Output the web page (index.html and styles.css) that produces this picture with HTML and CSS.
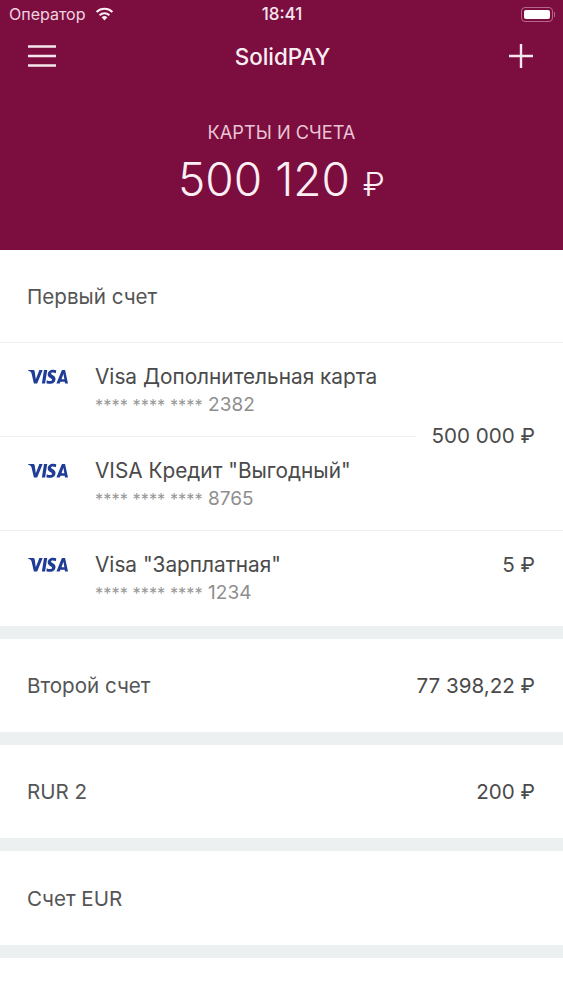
FILE: index.html
```html
<!DOCTYPE html>
<html lang="ru">
<head>
<meta charset="utf-8">
<title>SolidPAY</title>
<link rel="stylesheet" href="styles.css">
</head>
<body>
<header class="hero">
  <div class="status">
    <div class="status-left">
      <span class="carrier">Оператор</span>
      <svg class="wifi" width="19" height="14" viewBox="0 0 19 14"><path d="M9.500 13.500 6.600 10.300a4.200 4.200 0 0 1 5.800 0Z" fill="#fbeef4"/><path d="M4.600 8.200a7.100 7.100 0 0 1 9.800 0" fill="none" stroke="#fbeef4" stroke-width="2.100"/><path d="M1.600 5a11.400 11.400 0 0 1 15.800 0" fill="none" stroke="#fbeef4" stroke-width="2.100"/></svg>
    </div>
    <span class="time">18:41</span>
    <div class="battery-wrap">
      <div class="battery"><span class="battery-fill"></span></div>
      <span class="battery-nub"></span>
    </div>
  </div>
  <nav class="nav">
    <svg class="menu" width="28" height="22" viewBox="0 0 28 22"><path d="M0 1.500h28M0 11h28M0 20.500h28" stroke="#f6e6ee" stroke-width="2.400" fill="none"/></svg>
    <span class="brand">SolidPAY</span>
    <svg class="plus" width="24" height="24" viewBox="0 0 24 24"><path d="M12 0v24M0 12h24" stroke="#f6e6ee" stroke-width="2.400" fill="none"/></svg>
  </nav>
  <div class="total">
    <div class="total-label">КАРТЫ И СЧЕТА</div>
    <div class="total-sum">500 120 <span class="total-rub">₽</span></div>
  </div>
</header>
<main>
  <section class="account">
    <div class="acc-row acc-head"><span>Первый счет</span></div>
    <div class="card">
      <svg class="visa" viewBox="0 0 42 16" width="41" height="15.600"><use href="#visa"/></svg>
      <div class="card-info"><div class="card-name">Visa Дополнительная карта</div><div class="card-num"><span class="stars">**** **** ****</span> 2382</div></div>
      <span class="amount amount-over">500 000 ₽</span>
    </div>
    <div class="card">
      <svg class="visa" viewBox="0 0 42 16" width="41" height="15.600"><use href="#visa"/></svg>
      <div class="card-info"><div class="card-name">VISA Кредит "Выгодный"</div><div class="card-num"><span class="stars">**** **** ****</span> 8765</div></div>
    </div>
    <div class="card card-last">
      <svg class="visa" viewBox="0 0 42 16" width="41" height="15.600"><use href="#visa"/></svg>
      <div class="card-info"><div class="card-name">Visa "Зарплатная"</div><div class="card-num"><span class="stars">**** **** ****</span> 1234</div></div>
      <span class="amount">5 ₽</span>
    </div>
  </section>
  <section class="account acc-row"><span>Второй счет</span><span class="amount">77 398,22 ₽</span></section>
  <section class="account acc-row"><span>RUR 2</span><span class="amount">200 ₽</span></section>
  <section class="account acc-row acc-end"><span>Счет EUR</span></section>
</main>
<svg class="defs" width="0" height="0">
  <defs>
    <g id="visa" fill="#1f3c96">
      <path d="M0 1h5.200c.8 0 1.400.4 1.600 1.200L8 10.500 11.600 1h3.400L9.400 15H6L3.500 4.200C3 2.800 1.600 1.900 0 1.500Z"/>
      <path d="M16.400 1h3.300l-2.200 14h-3.300Z"/>
      <path d="M29 1.400l-.5 2.900c-1-.5-2-.7-3-.7-1.300 0-1.900.5-1.900 1.100 0 1.600 4.600 2 4.600 5.500 0 3.200-2.600 5-5.700 5-1.500 0-2.800-.3-3.700-.7l.5-3c1.100.6 2.200.9 3.300.9 1.300 0 2.100-.5 2.100-1.300 0-1.700-4.500-2-4.500-5.400C20.200 2.500 22.800.8 25.800.8c1.200 0 2.400.2 3.200.6Z"/>
      <path fill-rule="evenodd" d="M35.200 1H38l3 14h-3l-.4-2h-4.300l-.8 2h-3.400l5-12.500c.3-.9 1-1.500 1.100-1.500Zm1.100 4-1.900 5.400h2.900Z"/>
    </g>
  </defs>
</svg>
</body>
</html>
```
FILE: styles.css
```css
* { box-sizing: border-box; }
html, body { margin: 0; padding: 0; }
body {
  width: 563px;
  min-height: 1000px;
  background: #fff;
  font-family: "Inter", "Roboto", "Liberation Sans", sans-serif;
  color: #555;
  overflow: hidden;
}
.hero {
  height: 250px;
  background: #7b0e3e;
  color: #fff;
  display: flex;
  flex-direction: column;
}
.status {
  height: 28px;
  padding: 0 8px 0 9px;
  display: grid;
  grid-template-columns: 1fr auto 1fr;
  align-items: center;
  font-size: 16px;
}
.status-left { display: flex; align-items: center; gap: 10px; }
.carrier { color: #f0d3e0; }
.wifi { margin-top: 0; }
.time { color: #f6e6ee; font-size: 17px; font-weight: 500; }
.battery-wrap { justify-self: end; display: flex; align-items: center; gap: 1px; }
.battery {
  width: 32px;
  height: 15px;
  border: 1px solid #b9668c;
  border-radius: 4px;
  padding: 2px;
  display: flex;
}
.battery-fill { flex: 1; background: #fff; border-radius: 2px; }
.battery-nub { width: 1px; height: 5px; background: #b9668c; }
.nav {
  height: 56px;
  padding: 0 30px 0 28px;
  display: flex;
  align-items: center;
  justify-content: space-between;
}
.brand { font-size: 22.4px; font-weight: 500; color: #f8edf2; }
.total { margin-top: 37px; text-align: center; }
.total-label { font-size: 18.2px; line-height: 22px; color: #eac4d5; }
.total-sum { font-size: 46px; line-height: 56px; margin-top: 8px; color: #fbeef4; font-weight: 300; }
.total-rub { font-size: 33px; }
.account { background: #fff; font-size: 20.6px; border-bottom: 13px solid #edf0f1; }
.acc-row {
  height: 106px;
  padding: 0 28px 0 27px;
  display: flex;
  align-items: center;
  justify-content: space-between;
}
.acc-end { height: 107px; }
.acc-head { height: 93px; border-bottom: 1px solid #efefef; }
.card {
  position: relative;
  height: 94px;
  padding: 22px 28px 0;
  display: flex;
  align-items: flex-start;
  border-bottom: 1px solid #efefef;
}
.card-last { border-bottom: 0; height: 95px; }
.visa { margin-top: 4px; flex: none; }
.card-info { margin-left: 26px; flex: 1; }
.card-name { font-size: 20.8px; line-height: 24px; color: #4a4a4a; }
.card-num { font-size: 19px; line-height: 22px; margin-top: 5px; color: #8e8e8e; }
.stars { font-size: 16.4px; letter-spacing: 0; color: #9a9a9a; }
.amount { color: #4a4a4a; white-space: nowrap; font-size: 20.6px; line-height: 24px; }
.amount-over {
  position: absolute;
  right: 0;
  bottom: -12px;
  padding: 0 28px 0 15px;
  background: #fff;
}
.defs { position: absolute; }
```
